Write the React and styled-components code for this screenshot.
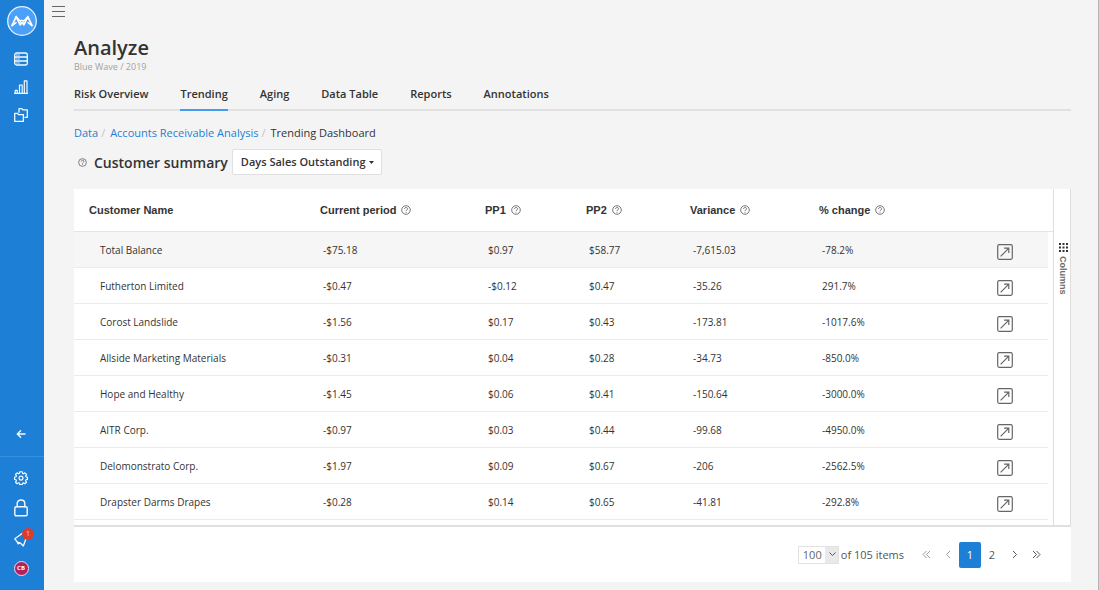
import React from "react";
import styled, { createGlobalStyle } from "styled-components";

const GlobalStyle = createGlobalStyle`
  *, *::before, *::after { box-sizing: border-box; }
  body {
    margin: 0;
    background: #f4f4f4;
    color: #333;
    font-family: "Open Sans", sans-serif;
    font-size: 11px;
    line-height: 16px;
  }
  button, select { font: inherit; color: inherit; }
  svg { display: block; }
`;

const Shell = styled.div`
  display: flex;
  min-height: 100vh;
  border-right: 1px solid #b4b4b4;
`;

const Sidebar = styled.nav`
  display: flex;
  flex-direction: column;
  flex: none;
  width: 44px;
  padding: 6px 0 9px;
  background: #1e7fd6;
  color: #fff;
`;

const SideGroup = styled.div`
  display: flex;
  flex-direction: column;
  align-items: center;
  padding-top: ${(p) => p.$top || 0}px;
  margin-top: ${(p) => (p.$end ? "auto" : 0)};
`;

const Divider = styled.hr`
  width: 44px;
  height: 1px;
  margin: 0;
  border: 0;
  background: #3590e0;
`;

const SideButton = styled.button`
  position: relative;
  display: flex;
  align-items: center;
  align-self: flex-start;
  justify-content: center;
  width: 42px;
  height: ${(p) => p.$height || 28}px;
  padding: 0;
  border: 0;
  background: none;
  cursor: pointer;
`;

const Badge = styled.span`
  position: absolute;
  top: 5px;
  right: 8px;
  width: 12px;
  height: 12px;
  border-radius: 50%;
  background: #dc3b30;
  color: #fbd3cf;
  font-size: 7px;
  line-height: 12px;
  text-align: center;
`;

const Avatar = styled.span`
  width: 15px;
  height: 15px;
  border: 1px solid #f3d9e6;
  border-radius: 50%;
  background: #b41f5c;
  color: #fff;
  font-size: 6px;
  font-weight: 700;
  line-height: 13px;
  text-align: center;
`;

const Content = styled.div`
  flex: 1;
  min-width: 0;
`;

const MenuButton = styled.button`
  display: block;
  margin: 0 0 0 8px;
  padding: 6px 0 0;
  border: 0;
  background: none;
  cursor: pointer;
`;

const Page = styled.main`
  padding: 17px 27px 7px 30px;
`;

const Title = styled.h1`
  margin: 0;
  font-size: 20px;
  font-weight: 600;
  line-height: 26px;
`;

const Subtitle = styled.p`
  margin: 0;
  color: #a3a3a3;
  font-size: 9px;
  line-height: 12px;
`;

const Tabs = styled.nav`
  display: flex;
  gap: 32px;
  margin-top: 11px;
  border-bottom: 2px solid #e1e1e1;
`;

const Tab = styled.a`
  height: 27px;
  margin-bottom: -2px;
  padding-top: 2px;
  border-bottom: 2px solid ${(p) => (p.$active ? "#469bee" : "transparent")};
  color: #333;
  font-weight: 600;
  text-decoration: none;
`;

const Breadcrumb = styled.nav`
  display: flex;
  margin-top: 14px;
`;

const Crumb = styled.a`
  color: #1e7fd6;
  text-decoration: none;
`;

const Slash = styled.span`
  width: 12px;
  padding-left: 3px;
  color: #c4c4c4;
`;

const Summary = styled.div`
  display: flex;
  align-items: center;
  margin: 7px 0 13px;
  padding-left: 4px;
`;

const SummaryTitle = styled.h2`
  margin: 0 4px 0 7px;
  padding-top: 2px;
  font-size: 14px;
  font-weight: 600;
  line-height: 26px;
`;

const SelectWrap = styled.span`
  position: relative;
  display: inline-flex;
`;

const MetricSelect = styled.select`
  appearance: none;
  width: 150px;
  height: 26px;
  padding: 0 8px;
  border: 1px solid #e0e0e0;
  border-radius: 2px;
  background: #fff;
  font-weight: 600;
`;

const Caret = styled.svg`
  position: absolute;
  top: 12px;
  right: 8px;
  pointer-events: none;
`;

const Card = styled.section`
  background: #fff;
`;

const GridArea = styled.div`
  display: flex;
  border-bottom: 2px solid #e0e0e0;
`;

const TableWrap = styled.div`
  flex: 1;
  min-width: 0;
  padding-bottom: 5px;
`;

const Table = styled.table`
  width: 100%;
  table-layout: fixed;
  border-spacing: 0;
`;

const Col = styled.col`
  width: ${(p) => (p.$width ? `${p.$width}px` : "auto")};
`;

const HeadCell = styled.th`
  height: 43px;
  padding: 0 0 0 ${(p) => (p.$flush ? 0 : 15)}px;
  border-bottom: 1px solid #e4e4e4;
  font-family: "Liberation Sans", Arial, sans-serif;
  font-weight: 700;
  text-align: left;
`;

const HeadLabel = styled.span`
  display: flex;
  align-items: center;
  gap: 5px;
`;

const Row = styled.tr`
  td:not(:last-child) {
    border-bottom: 1px solid #ebebeb;
    background: ${(p) => (p.$total ? "#f6f6f6" : "#fff")};
  }
`;

const Cell = styled.td`
  height: 36px;
  padding: 0 0 0 ${(p) => (p.$name ? 26 : 18)}px;
  font-size: 10px;
`;

const ActionCell = styled.td`
  padding: 4px 35px 0 0;
`;

const Spacer = styled.td`
  padding: 0;
`;

const OpenButton = styled.button`
  display: block;
  margin-left: auto;
  padding: 0;
  border: 0;
  background: none;
  cursor: pointer;
`;

const SidePanel = styled.aside`
  flex: none;
  width: 18px;
  padding: 54px 0 0 1px;
  border: solid #dedede;
  border-width: 0 1px;
`;

const ColumnsButton = styled.button`
  display: flex;
  align-items: center;
  gap: 4px;
  width: 16px;
  padding: 0;
  border: 0;
  background: none;
  color: #6c6c6c;
  font-family: "Liberation Sans", Arial, sans-serif;
  font-size: 9px;
  font-weight: 700;
  line-height: 16px;
  writing-mode: vertical-rl;
  cursor: pointer;
`;

const Footer = styled.footer`
  display: flex;
  align-items: center;
  justify-content: flex-end;
  height: 55px;
  padding-right: 24px;
  color: #555;
`;

const SizeSelect = styled.select`
  appearance: none;
  width: 41px;
  height: 18px;
  padding: 0 0 0 4px;
  border: 1px solid #e2e2e2;
  border-radius: 0;
  background: linear-gradient(to left, #e9e9e9 13px, #fff 13px);
  color: #666;
`;

const SizeChevron = styled.svg`
  position: absolute;
  top: 6px;
  right: 3px;
  pointer-events: none;
`;

const ItemCount = styled.span`
  margin: 0 11px 0 2px;
`;

const PageButton = styled.button`
  display: flex;
  align-items: center;
  justify-content: center;
  width: 22px;
  height: 26px;
  padding: 0;
  border: 0;
  border-radius: 2px;
  background: ${(p) => (p.$active ? "#1e7fd6" : "none")};
  color: ${(p) => (p.$active ? "#fff" : p.$muted ? "#a0a0a0" : "#555")};
  cursor: pointer;
`;

const Pages = styled.div`
  display: flex;
`;

function Help({ size = 10 }) {
  return (
    <svg width={size} height={size} viewBox="0 0 10 10" fill="none" stroke="#555" strokeWidth=".8">
      <circle cx="5" cy="5" r="4.3" />
      <path d="M3.5 4C3.5 2 6.6 2 6.6 3.9C6.6 5 5 4.8 5 6.2M5 7v.8" />
    </svg>
  );
}

function Chevron({ left, double }) {
  const d = double ? "M1 1l3.5 3.5L1 8M4.5 1L8 4.5 4.5 8" : "M3 1l3.5 3.5L3 8";
  return (
    <svg width="9" height="9" viewBox="0 0 9 9" fill="none" stroke="currentColor">
      <path d={d} transform={left ? "matrix(-1 0 0 1 9 0)" : undefined} />
    </svg>
  );
}

function LogoMark() {
  return (
    <svg width="30" height="30" viewBox="0 0 30 30" fill="none">
      <circle cx="15" cy="15" r="14.3" fill="#4ba0fa" stroke="#e6f2ff" strokeWidth="1.3" />
      <g stroke="#fff" strokeWidth="1.7" strokeLinejoin="round" strokeLinecap="round">
        <path d="M5 19.6L9.2 10.6L13.2 18.8L15 16.6L16.8 18.8L20.8 10.6L25 19.6" />
        <path d="M5 19.6L9 16.6M25 19.6L21 16.6M9.2 10.6L12.8 14.6H17.2L20.8 10.6" strokeWidth="1.4" />
        <circle cx="15" cy="15.6" r="1.5" strokeWidth="1.1" />
      </g>
    </svg>
  );
}

function SideIcon({ name }) {
  const line = { fill: "none", stroke: "#f4faff", strokeWidth: 1.3, strokeLinejoin: "round", strokeLinecap: "round" };
  switch (name) {
    case "data":
      return (
        <svg width="14" height="14" viewBox="0 0 14 14" {...line}>
          <rect x=".7" y="1" width="12.6" height="12" rx="2" />
          <path d="M.7 5h12.6M.7 9h12.6M2.9 3h.1M2.9 7h.1M2.9 11h.1M4.9 3h.1M4.9 7h.1M4.9 11h.1" />
        </svg>
      );
    case "chart":
      return (
        <svg width="14" height="14" viewBox="0 0 14 14" {...line} strokeWidth="1.2">
          <path d="M.3 13.3h13.4M1.2 13.3v-3h2v3M5.5 13.3V5h2.7v8.3M10.3 13.3V.8H13v12.5" />
        </svg>
      );
    case "folders":
      return (
        <svg width="14" height="14" viewBox="0 0 14 14" {...line}>
          <path d="M.7 5.4h2.8l1 1.2h4.9v6.7H.7zM5 4.2V.7h2.8l1 1.2h4.5v7.4H11" />
        </svg>
      );
    case "back":
      return (
        <svg width="10" height="10" viewBox="0 0 10 10" {...line} strokeWidth="1.4">
          <path d="M9 5H1.3M4.6 1.7L1.3 5l3.3 3.3" />
        </svg>
      );
    case "settings":
      return (
        <svg width="14" height="14" viewBox="0 0 15 15" {...line}>
          <path d="M6.2.8h2.6l.4 1.8 1 .4 1.6-1 1.7 1.8-1 1.5.4 1 1.6.4v2.2l-1.7.5-.4 1 1 1.6-1.7 1.7-1.5-1-1 .4-.4 1.5H6.2l-.4-1.6-1-.4-1.5 1L1.6 12l1-1.6-.4-1L.5 8.9V6.7l1.7-.5.4-1-1-1.5L3.3 2l1.5 1 1-.4z" />
          <circle cx="7.5" cy="7.6" r="2.1" />
        </svg>
      );
    case "lock":
      return (
        <svg width="14" height="18" viewBox="0 0 14 18" {...line} strokeWidth="1.4">
          <rect x=".8" y="7.8" width="12.4" height="9" rx="1.4" />
          <path d="M3.2 7.8V4.6C3.2-.3 10.8-.3 10.8 4.6v3.2" />
        </svg>
      );
    default:
      return (
        <svg width="15" height="15" viewBox="0 0 15 15" {...line}>
          <path d="M.8 6.8L9.2 .8L13 4L9.3 14L6.6 11.2L3.4 10.2zM3.4 10.4l.6 1.4 1.6-.6" />
        </svg>
      );
  }
}

const tabs = ["Risk Overview", "Trending", "Aging", "Data Table", "Reports", "Annotations"];
const headings = ["Customer Name", "Current period", "PP1", "PP2", "Variance", "% change"];
const rows = [
  ["Total Balance", "-$75.18", "$0.97", "$58.77", "-7,615.03", "-78.2%"],
  ["Futherton Limited", "-$0.47", "-$0.12", "$0.47", "-35.26", "291.7%"],
  ["Corost Landslide", "-$1.56", "$0.17", "$0.43", "-173.81", "-1017.6%"],
  ["Allside Marketing Materials", "-$0.31", "$0.04", "$0.28", "-34.73", "-850.0%"],
  ["Hope and Healthy", "-$1.45", "$0.06", "$0.41", "-150.64", "-3000.0%"],
  ["AITR Corp.", "-$0.97", "$0.03", "$0.44", "-99.68", "-4950.0%"],
  ["Delomonstrato Corp.", "-$1.97", "$0.09", "$0.67", "-206", "-2562.5%"],
  ["Drapster Darms Drapes", "-$0.28", "$0.14", "$0.65", "-41.81", "-292.8%"],
];

export default function App() {
  return (
    <Shell>
      <GlobalStyle />
      <Sidebar aria-label="Main">
        <SideGroup>
          <LogoMark />
        </SideGroup>
        <SideGroup $top={9}>
          <SideButton aria-label="Data"><SideIcon name="data" /></SideButton>
          <SideButton aria-label="Analyze"><SideIcon name="chart" /></SideButton>
          <SideButton aria-label="Files"><SideIcon name="folders" /></SideButton>
        </SideGroup>
        <SideGroup $end>
          <SideButton $height={44} aria-label="Collapse"><SideIcon name="back" /></SideButton>
        </SideGroup>
        <Divider />
        <SideGroup $top={6}>
          <SideButton $height={30} aria-label="Settings"><SideIcon name="settings" /></SideButton>
          <SideButton $height={30} aria-label="Security"><SideIcon name="lock" /></SideButton>
          <SideButton $height={32} aria-label="News">
            <SideIcon name="news" />
            <Badge>1</Badge>
          </SideButton>
          <SideButton $height={26} aria-label="Account"><Avatar>CB</Avatar></SideButton>
        </SideGroup>
      </Sidebar>
      <Content>
        <MenuButton aria-label="Menu">
          <svg width="13" height="12" viewBox="0 0 13 12" stroke="#666">
            <path d="M0 .5h13M0 5.5h13M0 10.5h13" />
          </svg>
        </MenuButton>
        <Page>
          <Title>Analyze</Title>
          <Subtitle>Blue Wave / 2019</Subtitle>
          <Tabs aria-label="Sections">
            {tabs.map((t) => (
              <Tab key={t} href="#" $active={t === "Trending"}>{t}</Tab>
            ))}
          </Tabs>
          <Breadcrumb aria-label="Breadcrumb">
            <Crumb href="#">Data</Crumb>
            <Slash>/</Slash>
            <Crumb href="#">Accounts Receivable Analysis</Crumb>
            <Slash>/</Slash>
            <span>Trending Dashboard</span>
          </Breadcrumb>
          <Summary>
            <Help size={9} />
            <SummaryTitle>Customer summary</SummaryTitle>
            <SelectWrap>
              <MetricSelect aria-label="Metric">
                <option>Days Sales Outstanding</option>
              </MetricSelect>
              <Caret width="5" height="3" viewBox="0 0 5 3"><path d="M0 0h5L2.5 3z" fill="#333" /></Caret>
            </SelectWrap>
          </Summary>
          <Card>
            <GridArea>
              <TableWrap>
                <Table>
                  <colgroup>
                    <Col $width={231} />
                    <Col $width={165} />
                    <Col $width={101} />
                    <Col $width={104} />
                    <Col $width={129} />
                    <Col $width={129} />
                    <Col />
                    <Col $width={5} />
                  </colgroup>
                  <thead>
                    <tr>
                      {headings.map((h, i) => (
                        <HeadCell key={h} scope="col">
                          <HeadLabel>{h}{i > 0 && <Help />}</HeadLabel>
                        </HeadCell>
                      ))}
                      <HeadCell as="td" $flush />
                      <HeadCell as="td" $flush />
                    </tr>
                  </thead>
                  <tbody>
                    {rows.map((r, n) => (
                      <Row key={r[0]} $total={n === 0}>
                        {r.map((value, i) => (
                          <Cell key={i} $name={i === 0}>{value}</Cell>
                        ))}
                        <ActionCell>
                          <OpenButton aria-label={`Open ${r[0]}`}>
                            <svg width="16" height="16" viewBox="0 0 16 16" fill="none" stroke="#666" strokeWidth="1.2">
                              <rect x=".7" y=".7" width="14.6" height="14.6" rx="1.5" />
                              <path d="M3.6 12.4l8-8M7 4.2h4.8V9" />
                            </svg>
                          </OpenButton>
                        </ActionCell>
                        <Spacer />
                      </Row>
                    ))}
                  </tbody>
                </Table>
              </TableWrap>
              <SidePanel>
                <ColumnsButton>
                  <svg width="9" height="9" viewBox="0 0 9 9" fill="#333">
                    <path d="M0 0h2v2H0zM3.5 0h2v2h-2zM7 0h2v2H7zM0 3.5h2v2H0zM3.5 3.5h2v2h-2zM7 3.5h2v2H7zM0 7h2v2H0zM3.5 7h2v2h-2zM7 7h2v2H7z" />
                  </svg>
                  Columns
                </ColumnsButton>
              </SidePanel>
            </GridArea>
            <Footer>
              <SelectWrap>
                <SizeSelect aria-label="Items per page">
                  <option>100</option>
                </SizeSelect>
                <SizeChevron width="7" height="5" viewBox="0 0 7 5" fill="none" stroke="#555">
                  <path d="M.5 .5l3 3 3-3" />
                </SizeChevron>
              </SelectWrap>
              <ItemCount>of 105 items</ItemCount>
              <Pages>
                <PageButton $muted aria-label="First page"><Chevron left double /></PageButton>
                <PageButton $muted aria-label="Previous page"><Chevron left /></PageButton>
                <PageButton $active>1</PageButton>
                <PageButton>2</PageButton>
                <PageButton aria-label="Next page"><Chevron /></PageButton>
                <PageButton aria-label="Last page"><Chevron double /></PageButton>
              </Pages>
            </Footer>
          </Card>
        </Page>
      </Content>
    </Shell>
  );
}
